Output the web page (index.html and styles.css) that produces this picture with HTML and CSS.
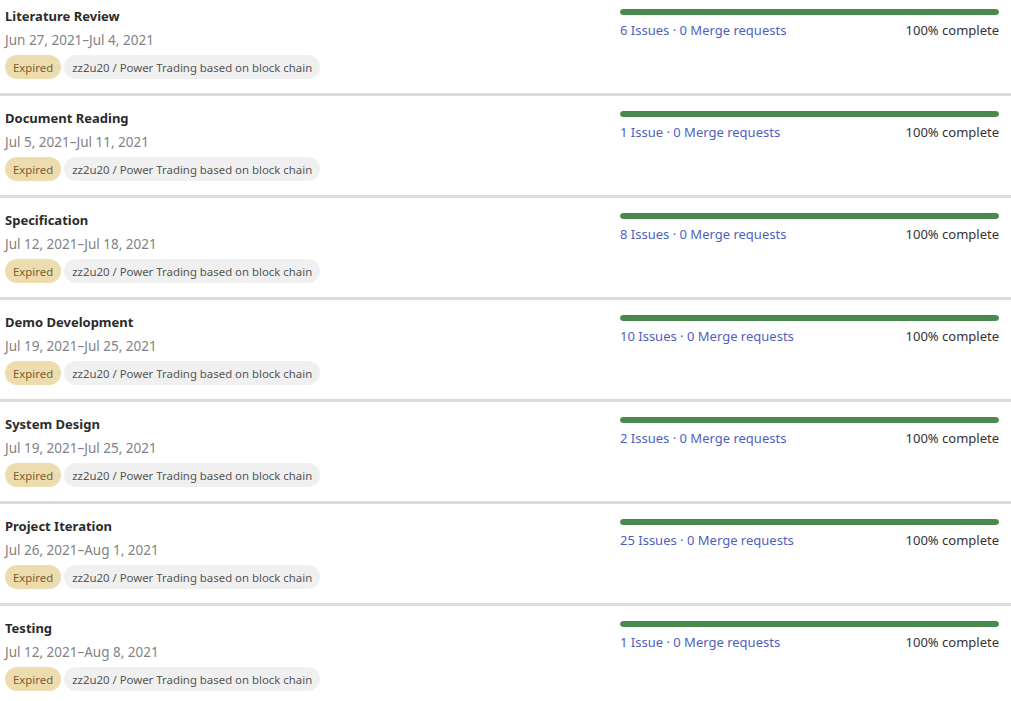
FILE: index.html
```html
<!DOCTYPE html>
<html lang="en">
<head>
<meta charset="utf-8">
<title>Milestones</title>
<link rel="stylesheet" href="styles.css">
</head>
<body>
<ul class="milestones">
  <li class="milestone">
    <div class="info">
      <div class="title">Literature Review</div>
      <div class="dates">Jun 27, 2021–Jul 4, 2021</div>
      <div class="badges"><span class="badge expired">Expired</span><span class="badge project">zz2u20 / Power Trading based on block chain</span></div>
    </div>
    <div class="progress">
      <div class="bar"><div class="fill" style="width:100%"></div></div>
      <div class="stats"><span class="links"><a href="#">6 Issues</a> · <a href="#">0 Merge requests</a></span><span class="pct">100% complete</span></div>
    </div>
  </li>
  <li class="milestone">
    <div class="info">
      <div class="title">Document Reading</div>
      <div class="dates">Jul 5, 2021–Jul 11, 2021</div>
      <div class="badges"><span class="badge expired">Expired</span><span class="badge project">zz2u20 / Power Trading based on block chain</span></div>
    </div>
    <div class="progress">
      <div class="bar"><div class="fill" style="width:100%"></div></div>
      <div class="stats"><span class="links"><a href="#">1 Issue</a> · <a href="#">0 Merge requests</a></span><span class="pct">100% complete</span></div>
    </div>
  </li>
  <li class="milestone">
    <div class="info">
      <div class="title">Specification</div>
      <div class="dates">Jul 12, 2021–Jul 18, 2021</div>
      <div class="badges"><span class="badge expired">Expired</span><span class="badge project">zz2u20 / Power Trading based on block chain</span></div>
    </div>
    <div class="progress">
      <div class="bar"><div class="fill" style="width:100%"></div></div>
      <div class="stats"><span class="links"><a href="#">8 Issues</a> · <a href="#">0 Merge requests</a></span><span class="pct">100% complete</span></div>
    </div>
  </li>
  <li class="milestone">
    <div class="info">
      <div class="title">Demo Development</div>
      <div class="dates">Jul 19, 2021–Jul 25, 2021</div>
      <div class="badges"><span class="badge expired">Expired</span><span class="badge project">zz2u20 / Power Trading based on block chain</span></div>
    </div>
    <div class="progress">
      <div class="bar"><div class="fill" style="width:100%"></div></div>
      <div class="stats"><span class="links"><a href="#">10 Issues</a> · <a href="#">0 Merge requests</a></span><span class="pct">100% complete</span></div>
    </div>
  </li>
  <li class="milestone">
    <div class="info">
      <div class="title">System Design</div>
      <div class="dates">Jul 19, 2021–Jul 25, 2021</div>
      <div class="badges"><span class="badge expired">Expired</span><span class="badge project">zz2u20 / Power Trading based on block chain</span></div>
    </div>
    <div class="progress">
      <div class="bar"><div class="fill" style="width:100%"></div></div>
      <div class="stats"><span class="links"><a href="#">2 Issues</a> · <a href="#">0 Merge requests</a></span><span class="pct">100% complete</span></div>
    </div>
  </li>
  <li class="milestone">
    <div class="info">
      <div class="title">Project Iteration</div>
      <div class="dates">Jul 26, 2021–Aug 1, 2021</div>
      <div class="badges"><span class="badge expired">Expired</span><span class="badge project">zz2u20 / Power Trading based on block chain</span></div>
    </div>
    <div class="progress">
      <div class="bar"><div class="fill" style="width:100%"></div></div>
      <div class="stats"><span class="links"><a href="#">25 Issues</a> · <a href="#">0 Merge requests</a></span><span class="pct">100% complete</span></div>
    </div>
  </li>
  <li class="milestone">
    <div class="info">
      <div class="title">Testing</div>
      <div class="dates">Jul 12, 2021–Aug 8, 2021</div>
      <div class="badges"><span class="badge expired">Expired</span><span class="badge project">zz2u20 / Power Trading based on block chain</span></div>
    </div>
    <div class="progress">
      <div class="bar"><div class="fill" style="width:100%"></div></div>
      <div class="stats"><span class="links"><a href="#">1 Issue</a> · <a href="#">0 Merge requests</a></span><span class="pct">100% complete</span></div>
    </div>
  </li>
</ul>
</body>
</html>
```

FILE: styles.css
```css
html, body {
  margin: 0;
  padding: 0;
  background: #fff;
}
body {
  font-family: "Noto Sans", "Open Sans", sans-serif;
  font-size: 13px;
  color: #333238;
  overflow: hidden;
}
.milestones {
  list-style: none;
  margin: -6px 0 0 0;
  padding: 0;
}
.milestone {
  display: flex;
  justify-content: space-between;
  padding: 12px 12px 14px 5px;
  border-bottom: 3px solid #dbdbdb;
}
.info {
  display: flex;
  flex-direction: column;
}
.title {
  font-weight: 700;
  font-size: 13px;
  line-height: 20px;
  color: #2b2b2b;
}
.dates {
  margin-top: 4px;
  font-size: 13.5px;
  line-height: 20px;
  color: #838287;
}
.badges {
  display: flex;
  gap: 3px;
  margin-top: 5px;
}
.badge {
  display: inline-flex;
  align-items: center;
  height: 24px;
  padding: 0 8px;
  border-radius: 12px;
  font-size: 11.4px;
}
.expired {
  background: #eddcae;
  color: #7b5c2e;
}
.project {
  background: #f0f0f0;
  color: #555;
}
.progress {
  width: 379px;
  padding-top: 3px;
}
.bar {
  height: 6px;
  border-radius: 3px;
  background: #e6e6e6;
  overflow: hidden;
}
.fill {
  height: 100%;
  background: #4a8a4e;
  border-radius: 3px;
}
.stats {
  display: flex;
  justify-content: space-between;
  margin-top: 5px;
  line-height: 20px;
  font-size: 13px;
}
.links {
  color: #5363bf;
}
.links a {
  color: #4f5fbf;
  text-decoration: none;
}
.pct {
  color: #333238;
}
```
